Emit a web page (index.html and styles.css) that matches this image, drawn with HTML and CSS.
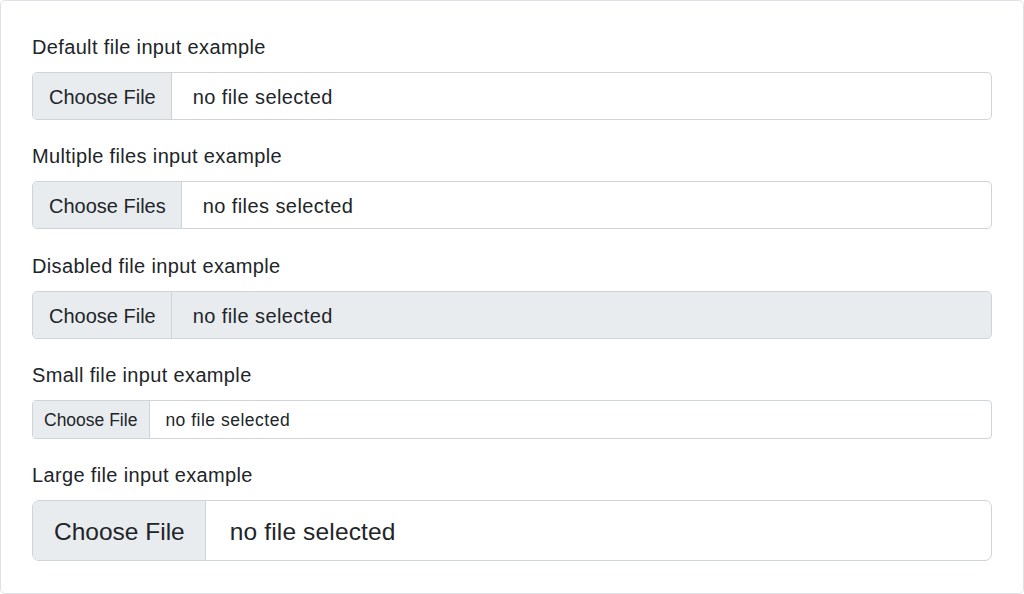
FILE: index.html
```html
<!DOCTYPE html>
<html>
<head>
<meta charset="utf-8">
<link rel="stylesheet" href="styles.css">
</head>
<body>
<div class="card">
  <div class="group">
    <div class="label">Default file input example</div>
    <div class="file">
      <span class="btn">Choose File</span>
      <span class="name">no file selected</span>
    </div>
  </div>
  <div class="group wide">
    <div class="label">Multiple files input example</div>
    <div class="file">
      <span class="btn">Choose Files</span>
      <span class="name">no files selected</span>
    </div>
  </div>
  <div class="group">
    <div class="label">Disabled file input example</div>
    <div class="file disabled">
      <span class="btn">Choose File</span>
      <span class="name">no file selected</span>
    </div>
  </div>
  <div class="group">
    <div class="label">Small file input example</div>
    <div class="file sm">
      <span class="btn">Choose File</span>
      <span class="name">no file selected</span>
    </div>
  </div>
  <div class="group last">
    <div class="label">Large file input example</div>
    <div class="file lg">
      <span class="btn">Choose File</span>
      <span class="name">no file selected</span>
    </div>
  </div>
</div>
</body>
</html>
```
FILE: styles.css
```css
* { box-sizing: border-box; }
html, body { margin: 0; padding: 0; background: #fff; }
body {
  font-family: "Liberation Sans", Arial, Helvetica, sans-serif;
  color: #212529;
  width: 1024px;
  height: 594px;
}
.card {
  width: 1024px;
  height: 594px;
  border: 1px solid #dee2e6;
  border-radius: 5px;
  padding: 31px 31px 0 31px;
}
.group { margin-bottom: 21px; }
.group.wide { margin-bottom: 22px; }
.group.last { margin-bottom: 0; }
.label {
  font-size: 20px;
  line-height: 30px;
  height: 30px;
  margin-bottom: 10px;
  letter-spacing: 0.35px;
}
.file {
  display: flex;
  align-items: stretch;
  height: 48px;
  border: 1px solid #ced4da;
  border-radius: 5px;
  overflow: hidden;
  font-size: 20px;
  background: #fff;
}
.file .btn {
  display: flex;
  align-items: center;
  padding: 2px 15px 0 16px;
  background: #e9ecef;
  border-right: 1px solid #ced4da;
}
.file .name {
  display: flex;
  align-items: center;
  padding: 2px 0 0 21px;
  letter-spacing: 0.42px;
}
.file.disabled { background: #e9ecef; }
.file.sm {
  height: 39px;
  font-size: 17.5px;
  border-radius: 4px;
}
.file.sm .btn { padding: 2px 12px 0 11px; }
.file.sm .name { padding-left: 15px; letter-spacing: 0.5px; }
.file.lg {
  height: 61px;
  font-size: 24.5px;
  border-radius: 7px;
}
.file.lg .btn { padding: 2px 20px 0 21px; }
.file.lg .name { padding-left: 24px; letter-spacing: 0.15px; }
```
